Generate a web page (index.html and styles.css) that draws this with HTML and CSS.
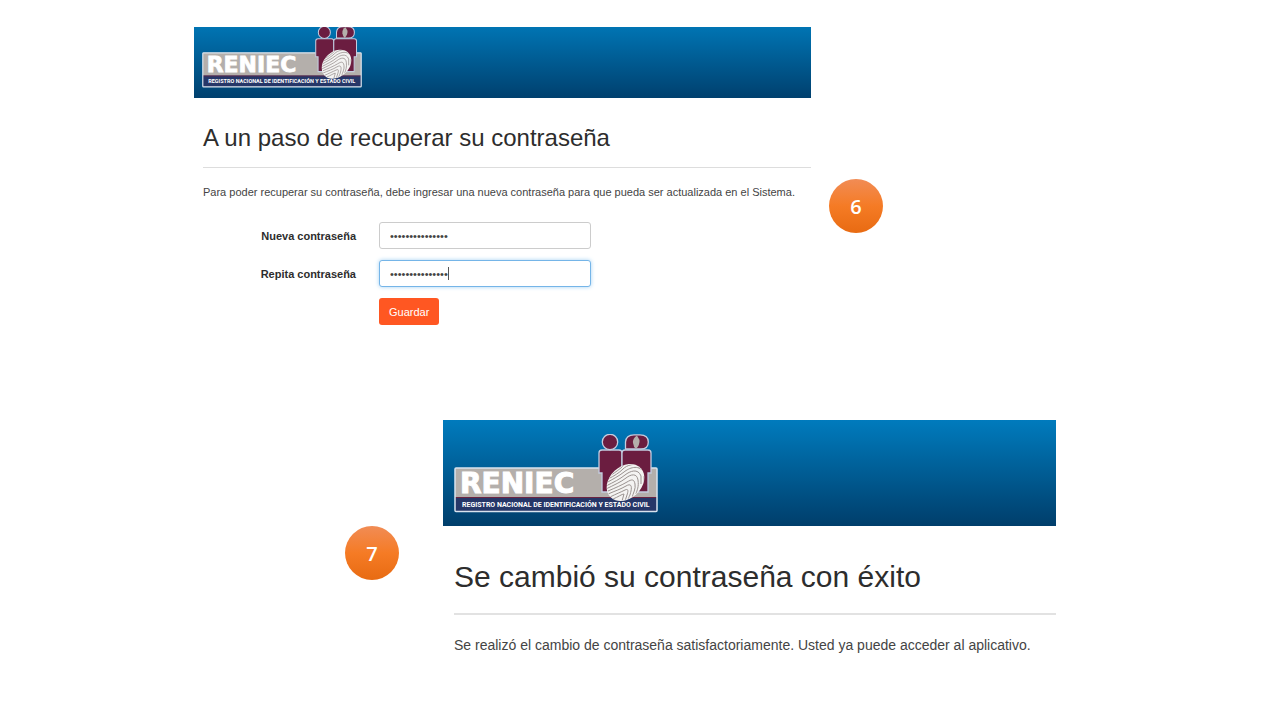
FILE: index.html
```html
<!DOCTYPE html>
<html lang="es">
<head>
<meta charset="utf-8">
<meta name="viewport" content="width=device-width, initial-scale=1">
<title>Recuperar contraseña</title>
<link rel="stylesheet" href="styles.css">
</head>
<body>
<main class="slide">
  <section class="step step-form">
    <div class="panel">
      <header class="banner banner-small">
        <svg class="logo" viewBox="0 0 204 80" role="img" aria-label="RENIEC">
          <clipPath id="print-edge"><ellipse rx="20.500" ry="15.500" transform="translate(171.500 48.500) rotate(-43)"/></clipPath>
          <g id="logo">
            <rect x="1" y="34" width="202" height="43.500" rx="1" fill="#b4afab"/>
            <rect x="1" y="63" width="202" height="14.500" fill="#263768"/>
            <path d="M1 63.500H203" stroke="#6b2442" stroke-width="1"/>
            <rect x="1" y="34" width="202" height="43.500" rx="1" fill="none" stroke="#d9e3ee" stroke-width="1.500"/>
            <g fill="#6b1d40" stroke="#c3cde0" stroke-width="1.300">
              <path d="M148 58V39H145V19Q145 16 148 16H165Q168 16 168 19V58Z"/>
              <path d="M171 58V39H168V19Q168 16 171 16H194Q197 16 197 19V39H194V58Z"/>
              <circle cx="156" cy="8" r="7.700"/>
              <path d="M171.500 15V8Q172 .8 180 .8H186Q194.300 .8 194.300 8Q194.300 15 187 15Z"/>
            </g>
            <path d="M183 1.500Q178.500 4 179 9Q179.500 13 182 15Q186 11 185.500 6Z" fill="#b4afab"/>
            <ellipse rx="21" ry="16" transform="translate(171.500 48.500) rotate(-43)" fill="#f4f3f2"/>
            <g clip-path="url(#print-edge)" fill="none" stroke="#99918f" stroke-width="1">
              <path d="M152 49C159 45 165 42 170 38S184 30 190 38"/>
              <path d="M152 52C160 48 166 45 171 41S184 34 187 42V50"/>
              <path d="M152 55C160 51 167 48 172 44S183 39 184 46S183 56 182 60"/>
              <path d="M154 57C161 54 168 51 173 48S180 45 181 50S179 59 178 64"/>
              <path d="M154 60C161 57 167 55 172 52S178 52 177 57S175 62 174 66"/>
              <path d="M156 63C162 60 167 58 171 56S174 58 173 61L171 67"/>
              <path d="M159 65C164 63 168 60 170 60L168 67"/>
              <path d="M154 45C160 42 165 39 169 35S180 29 190 31"/>
              <path d="M157 41C162 38 166 35 170 31"/>
              <path d="M190 42V52L185 58"/>
            </g>
            <text x="6" y="59" class="logo-name">RENIEC</text>
            <text x="8" y="73" class="logo-tagline">REGISTRO NACIONAL DE IDENTIFICACIÓN Y ESTADO CIVIL</text>
          </g>
        </svg>
      </header>
      <div class="content content-small">
        <h1 class="title">A un paso de recuperar su contraseña</h1>
        <p class="message">Para poder recuperar su contraseña, debe ingresar una nueva contraseña para que pueda ser actualizada en el Sistema.</p>
        <form class="form">
          <label class="label" for="nueva">Nueva contraseña</label>
          <div class="field"><input class="input" id="nueva" type="password" value="abcdefghijklmno"></div>
          <label class="label" for="repita">Repita contraseña</label>
          <div class="field"><input class="input input-active" id="repita" type="password" value="abcdefghijklmno"><span class="caret"></span></div>
          <button class="button" type="button">Guardar</button>
        </form>
      </div>
    </div>
    <div class="badge badge-six">6</div>
  </section>

  <section class="step step-done">
    <div class="badge badge-seven">7</div>
    <div class="panel">
      <header class="banner banner-large">
        <svg class="logo" viewBox="0 0 204 80" role="img" aria-label="RENIEC"><use href="#logo"/></svg>
      </header>
      <div class="content content-large">
        <h2 class="title">Se cambió su contraseña con éxito</h2>
        <p class="message">Se realizó el cambio de contraseña satisfactoriamente. Usted ya puede acceder al aplicativo.</p>
      </div>
    </div>
  </section>
</main>
</body>
</html>
```

FILE: styles.css
```css
* { box-sizing: border-box; }

body {
  margin: 0;
  background: #fff;
  color: #2d2d2d;
  font-family: "Liberation Sans", Arial, sans-serif;
}

.slide { padding-top: 27px; }

.step { display: grid; align-items: start; }

.step-form {
  grid-template-columns: 194fr 617fr 18fr 54fr 397fr;
  min-height: 393px;
}
.step-form .panel { grid-column: 2; }
.step-form .badge { grid-column: 4; }

.step-done { grid-template-columns: 345fr 54fr 44fr 613fr 224fr; }
.step-done .badge { grid-column: 2; }
.step-done .panel { grid-column: 4; }

.panel { min-width: 0; }

.banner {
  overflow: hidden;
  display: flex;
  align-items: flex-end;
}
.banner-small {
  height: 71px;
  padding: 0 0 9px 8px;
  background: linear-gradient(#0074b3, #00406e);
}
.banner-large {
  height: 106px;
  padding: 0 0 12px 11px;
  background: linear-gradient(#007bbd, #003e6b);
}
.logo { flex: none; display: block; }
.banner-small .logo { width: 160px; height: 63px; }
.banner-large .logo { width: 204px; height: 80px; }
.logo-name {
  font: bold 28px "DejaVu Sans", sans-serif;
  fill: #fff;
  stroke: #fff;
  stroke-width: 1px;
}
.logo-tagline {
  font: bold 7px Roboto, sans-serif;
  fill: #fff;
}

.title { margin: 0; font-weight: normal; }
.message { margin: 0; color: #444; }

.content-small { padding: 24px 0 0 9px; }
.content-small .title {
  padding-bottom: 13px;
  border-bottom: 1px solid #ddd;
  font-size: 24px;
  line-height: 32px;
}
.content-small .message {
  padding-top: 16px;
  font-size: 11px;
  line-height: 16px;
  white-space: nowrap;
}

.content-large { padding: 32px 0 0 11px; }
.content-large .title {
  padding-bottom: 17px;
  border-bottom: 2px solid #e2e2e2;
  font-size: 30px;
  line-height: 38px;
}
.content-large .message {
  padding-top: 20px;
  font-size: 14px;
  line-height: 20px;
  white-space: nowrap;
}

.form {
  display: grid;
  grid-template-columns: 153px 212px;
  column-gap: 23px;
  row-gap: 11px;
  align-items: center;
  padding-top: 22px;
}
.label {
  text-align: right;
  font-size: 11px;
  font-weight: bold;
}
.field { position: relative; display: flex; }
.input {
  width: 100%;
  height: 27px;
  padding: 0 10px;
  border: 1px solid #ccc;
  border-radius: 3px;
  background: #fff;
  color: #444;
  font: 11px "Liberation Sans", Arial, sans-serif;
  outline: none;
}
.input-active {
  border-color: #75b5e8;
  box-shadow: 0 0 4px #a5d2f3;
}
.caret {
  position: absolute;
  top: 7px;
  left: 69px;
  width: 1px;
  height: 13px;
  background: #555;
}
.button {
  grid-column: 2;
  justify-self: start;
  height: 27px;
  padding: 0 10px;
  border: 0;
  border-radius: 3px;
  background: #ff5722;
  color: #fff;
  font: 11px "Liberation Sans", Arial, sans-serif;
}

.badge {
  display: flex;
  align-items: center;
  justify-content: center;
  width: 54px;
  height: 54px;
  border-radius: 50%;
  background: linear-gradient(#f18c55, #f57b25 50%, #e86b12);
  color: #fff;
  font: 600 20px "Open Sans", sans-serif;
}
.badge-six { margin-top: 152px; }
.badge-seven { margin-top: 106px; }
```
